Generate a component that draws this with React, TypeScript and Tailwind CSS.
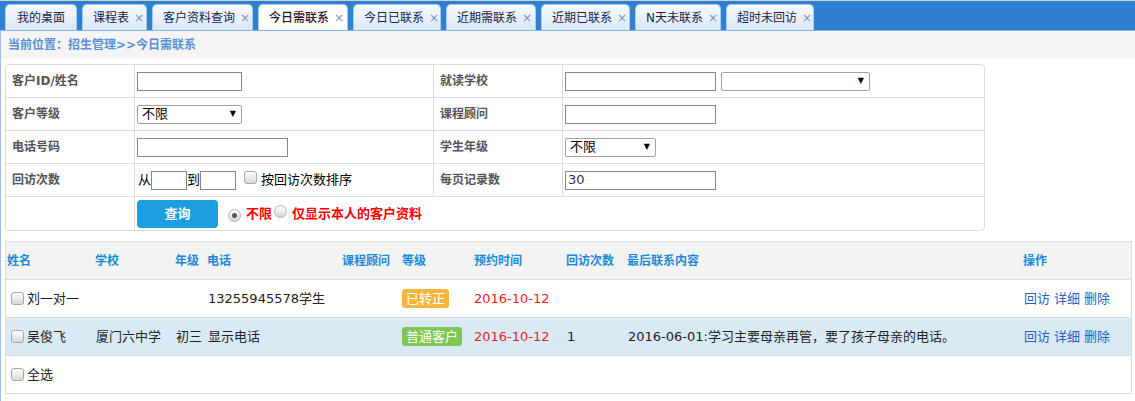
import React from 'react'

const tabs = [
  { name: '我的桌面', w: 'w-[72px]', close: false },
  { name: '课程表', w: 'w-[65px]', close: true },
  { name: '客户资料查询', w: 'w-[101px]', close: true },
  { name: '今日需联系', w: 'w-[90px]', close: true, active: true },
  { name: '今日已联系', w: 'w-[88px]', close: true },
  { name: '近期需联系', w: 'w-[90px]', close: true },
  { name: '近期已联系', w: 'w-[89px]', close: true },
  { name: 'N天未联系', w: 'w-[86px]', close: true },
  { name: '超时未回访', w: 'w-[88px]', close: true },
]

function Checkbox() {
  return (
    <span className="inline-block w-[13px] h-[13px] shrink-0 rounded-[3px] border border-[#a8a8a8] bg-linear-to-b from-white to-[#d9d9d9]" />
  )
}

function Radio({ checked }: { checked?: boolean }) {
  return (
    <span className="inline-flex w-[13px] h-[13px] shrink-0 items-center justify-center rounded-full border border-[#b4b4b4] bg-linear-to-b from-white to-[#d6d6d6]">
      {checked && <span className="w-[5px] h-[5px] rounded-full bg-[#555]" />}
    </span>
  )
}

function TextBox({ w, value }: { w: string; value?: string }) {
  return (
    <div className={`${w} h-[19px] border border-[#7f8f7a] bg-white flex items-center pl-[2px] text-[13px] text-[#333]`}>
      {value}
    </div>
  )
}

function Select({ w, value }: { w: string; value?: string }) {
  return (
    <div className={`${w} h-[19px] border border-[#a3a3a3] rounded-[2px] bg-white flex items-center justify-between pl-[4px] pr-[5px] text-[13px] text-black`}>
      <span>{value}</span>
      <span className="text-[8px] leading-none">▼</span>
    </div>
  )
}

function Label({ children, last }: { children?: React.ReactNode; last?: boolean }) {
  return (
    <div className={`h-[33px] border-r border-[#ddd] ${last ? '' : 'border-b'} flex items-center pl-[6px] text-[12px] font-bold text-[#555]`}>
      {children}
    </div>
  )
}

function Field({ children, last, right }: { children?: React.ReactNode; last?: boolean; right?: boolean }) {
  return (
    <div className={`h-[33px] border-[#ddd] ${right ? '' : 'border-r'} ${last ? '' : 'border-b'} flex items-center pl-[2px]`}>
      {children}
    </div>
  )
}

const cols = 'grid grid-cols-[88px_80px_32px_135px_60px_72px_92px_61px_396px_1fr]'

export default function App() {
  return (
    <div className="w-[1135px] h-[401px] bg-white overflow-hidden font-['DejaVu_Sans','Noto_Sans_CJK_SC',sans-serif] text-[#222]">
      {/* tab bar */}
      <div className="h-[31px] border-t border-[#cfcfcf] bg-[#2e80d0] border-b border-b-[#86b4e6] flex items-end gap-[5px] pl-[5px]">
        {tabs.map((t) => (
          <div
            key={t.name}
            className={`${t.w} h-[26px] rounded-t-[5px] border border-b-0 border-[#a9cbef] flex items-center ${t.close ? 'pl-[10px]' : 'justify-center'} text-[12px] ${
              t.active ? 'bg-white text-[#2a1630] font-medium' : 'bg-linear-to-b from-[#f6f9fe] to-[#dbe8f9] text-[#16244a]'
            }`}
          >
            <span>{t.name}</span>
            {t.close && <span className="ml-[5px] text-[12px] text-[#7d92bd]">×</span>}
          </div>
        ))}
      </div>

      <div className="border-l border-[#9dc0ea] h-[370px]">
        {/* breadcrumb */}
        <div className="h-[28px] bg-[#f4f4f4] flex items-center pl-[7px] text-[12px] font-bold text-[#5b8fd6]">
          当前位置：招生管理&gt;&gt;今日需联系
        </div>

        {/* search form */}
        <div className="ml-[4px] mt-[5px] w-[980px] border border-[#ddd] rounded-[4px] bg-white grid grid-cols-[129px_299px_129px_1fr]">
          <Label>客户ID/姓名</Label>
          <Field>
            <TextBox w="w-[105px]" />
          </Field>
          <Label>就读学校</Label>
          <Field right>
            <div className="flex gap-[5px]">
              <TextBox w="w-[151px]" />
              <Select w="w-[149px]" />
            </div>
          </Field>

          <Label>客户等级</Label>
          <Field>
            <Select w="w-[105px]" value="不限" />
          </Field>
          <Label>课程顾问</Label>
          <Field right>
            <TextBox w="w-[151px]" />
          </Field>

          <Label>电话号码</Label>
          <Field>
            <TextBox w="w-[151px]" />
          </Field>
          <Label>学生年级</Label>
          <Field right>
            <Select w="w-[91px]" value="不限" />
          </Field>

          <Label>回访次数</Label>
          <Field>
            <div className="flex items-center text-[13px] text-black">
              <span className="pl-[1px]">从</span>
              <TextBox w="w-[36px]" />
              <span>到</span>
              <TextBox w="w-[36px]" />
              <span className="ml-[8px] mr-[4px]">
                <Checkbox />
              </span>
              <span>按回访次数排序</span>
            </div>
          </Field>
          <Label>每页记录数</Label>
          <Field right>
            <TextBox w="w-[151px]" value="30" />
          </Field>

          <Label last />
          <div className="col-span-3 h-[33px] flex items-center pl-[2px] text-[13px]">
            <button className="w-[81px] h-[28px] rounded-[4px] bg-[#1e9de0] text-white font-bold text-[13px]">查询</button>
            <span className="ml-[10px] mr-[5px]">
              <Radio checked />
            </span>
            <span className="font-bold text-[#f00]">不限</span>
            <span className="ml-[2px] mr-[5px]">
              <Radio />
            </span>
            <span className="font-bold text-[#f00]">仅显示本人的客户资料</span>
          </div>
        </div>

        {/* result table */}
        <div className="ml-[4px] mt-[10px] w-[1127px] border border-[#ddd] text-[13px]">
          <div className={`${cols} h-[38px] bg-[#f3f3f3] border-b border-[#ddd] items-center text-[12px] font-bold text-[#1c8ad6]`}>
            <div className="pl-[1px]">姓名</div>
            <div className="pl-[1px]">学校</div>
            <div className="pl-[1px]">年级</div>
            <div className="pl-[1px]">电话</div>
            <div className="pl-[1px]">课程顾问</div>
            <div className="pl-[1px]">等级</div>
            <div className="pl-[1px]">预约时间</div>
            <div className="pl-[1px]">回访次数</div>
            <div className="pl-[1px]">最后联系内容</div>
            <div className="pl-[1px]">操作</div>
          </div>

          <div className={`${cols} h-[38px] bg-white border-b border-[#ddd] items-center`}>
            <div className="pl-[5px] flex items-center gap-[3px]">
              <Checkbox />
              <span>刘一对一</span>
            </div>
            <div />
            <div />
            <div className="pl-[2px]">13255945578学生</div>
            <div />
            <div className="pl-[1px]">
              <span className="inline-block px-[4px] h-[19px] leading-[19px] rounded-[3px] bg-[#f6b63e] text-white">已转正</span>
            </div>
            <div className="pl-[1px] text-[#f01d1d]">2016-10-12</div>
            <div />
            <div />
            <div className="pl-[2px] text-[#2b5fc2] flex gap-[4px]">
              <span>回访</span>
              <span>详细</span>
              <span>删除</span>
            </div>
          </div>

          <div className={`${cols} h-[38px] bg-[#d9eaf5] border-b border-[#ddd] items-center`}>
            <div className="pl-[5px] flex items-center gap-[3px]">
              <Checkbox />
              <span>吴俊飞</span>
            </div>
            <div className="pl-[2px]">厦门六中学</div>
            <div className="pl-[2px]">初三</div>
            <div className="pl-[2px]">显示电话</div>
            <div />
            <div className="pl-[1px]">
              <span className="inline-block px-[4px] h-[19px] leading-[19px] rounded-[3px] bg-[#7cc853] text-white">普通客户</span>
            </div>
            <div className="pl-[1px] text-[#f01d1d]">2016-10-12</div>
            <div className="pl-[2px] text-[#111a55]">1</div>
            <div className="pl-[2px]">2016-06-01:学习主要母亲再管，要了孩子母亲的电话。</div>
            <div className="pl-[2px] text-[#2b5fc2] flex gap-[4px]">
              <span>回访</span>
              <span>详细</span>
              <span>删除</span>
            </div>
          </div>

          <div className="h-[37px] bg-white flex items-center pl-[5px] gap-[3px]">
            <Checkbox />
            <span>全选</span>
          </div>
        </div>
      </div>
    </div>
  )
}
